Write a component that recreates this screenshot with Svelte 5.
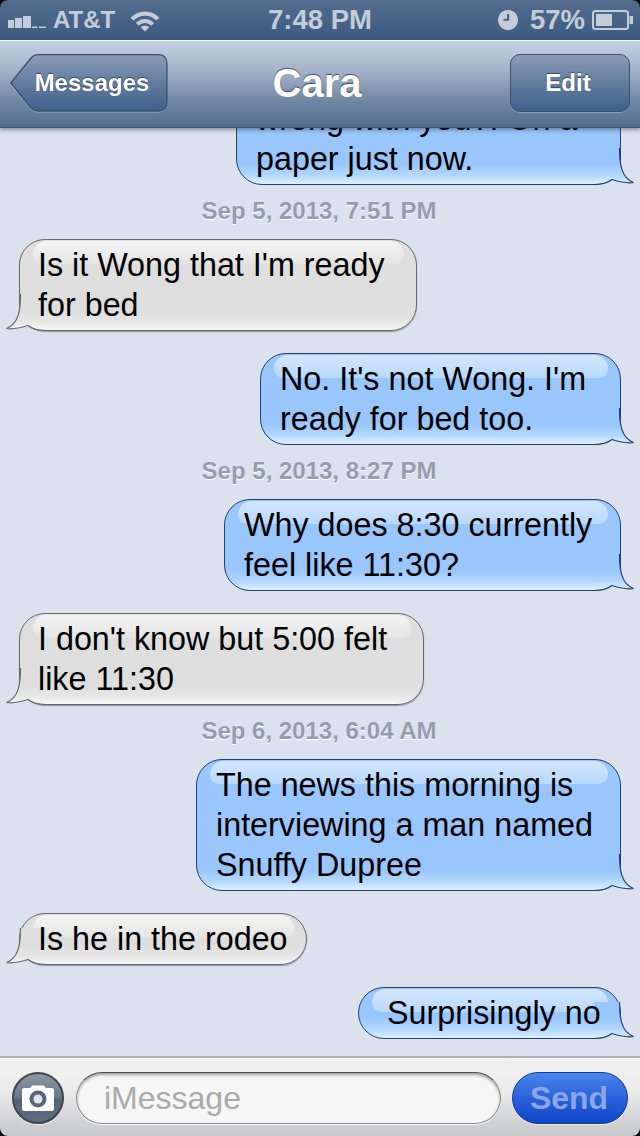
<script>
  const messages = [
    { kind: 'out', width: 385, lines: ['wrong with you?! On a', 'paper just now.'] },
    { date: 'Sep 5, 2013, 7:51 PM' },
    { kind: 'in', width: 398, lines: ["Is it Wong that I'm ready", 'for bed'] },
    { kind: 'out', width: 361, lines: ["No. It's not Wong. I'm", 'ready for bed too.'] },
    { date: 'Sep 5, 2013, 8:27 PM' },
    { kind: 'out', width: 397, lines: ['Why does 8:30 currently', 'feel like 11:30?'] },
    { kind: 'in', width: 405, lines: ["I don't know but 5:00 felt", 'like 11:30'] },
    { date: 'Sep 6, 2013, 6:04 AM' },
    { kind: 'out', width: 425, lines: ['The news this morning is', 'interviewing a man named', 'Snuffy Dupree'] },
    { kind: 'in', width: 288, lines: ['Is he in the rodeo'] },
    { kind: 'out', width: 263, lines: ['Surprisingly no'] }
  ];
</script>

<div class="phone">
  <svg class="defs" width="0" height="0" aria-hidden="true">
    <defs>
      <linearGradient id="tail-out" x1="0" y1="0" x2="0" y2="1">
        <stop offset="0" stop-color="#98c6fd" />
        <stop offset="0.45" stop-color="#98c6fd" />
        <stop offset="0.76" stop-color="#b5d9fd" />
        <stop offset="0.97" stop-color="#dcf2ff" />
      </linearGradient>
      <linearGradient id="tail-in" x1="0" y1="0" x2="0" y2="1">
        <stop offset="0" stop-color="#dedede" />
        <stop offset="0.45" stop-color="#dedede" />
        <stop offset="0.76" stop-color="#e6e6e6" />
        <stop offset="0.97" stop-color="#f6f6f6" />
      </linearGradient>
    </defs>
  </svg>

  <header class="status">
    <div class="carrier">
      <svg class="signal" width="38" height="12" viewBox="0 0 38 12">
        <rect x="0" y="4" width="6" height="8" />
        <rect x="7" y="2" width="7" height="10" />
        <rect x="15" y="0" width="8" height="12" />
        <rect x="24" y="10.500" width="5.500" height="1.500" />
        <rect x="31" y="10.500" width="7" height="1.500" />
      </svg>
      <span>AT&amp;T</span>
      <svg class="wifi" width="32" height="23" viewBox="0 0 32 24">
        <path d="M1 9 C 9 0.5 23 0.5 31 9 L 28 12 C 21.500 5.500 10.500 5.500 4 12 Z" />
        <path d="M6.500 14.500 C 12 9 20 9 25.500 14.500 L 22.500 17.500 C 18.500 13.500 13.500 13.500 9.500 17.500 Z" />
        <path d="M11.500 19 C 14 17 18 17 20.500 19 L 16 23.500 Z" />
      </svg>
    </div>
    <div class="time">7:48 PM</div>
    <div class="power">
      <svg class="clock" width="20" height="20" viewBox="0 0 20 20">
        <path fill-rule="evenodd" d="M10 0 a10 10 0 1 0 0.010 0 Z M9 4 h2.200 v6.800 H5.500 v-2 H9 Z" />
      </svg>
      <span>57%</span>
      <svg class="battery" width="42" height="20" viewBox="0 0 42 20">
        <rect x="1" y="1" width="35" height="18" rx="2.500" fill="none" stroke-width="2" />
        <rect x="4" y="4" width="16" height="12" class="charge" />
        <rect x="37.500" y="6" width="3.500" height="8" class="charge" />
      </svg>
    </div>
  </header>

  <nav class="bar">
    <button class="back">
      <svg width="158" height="58" viewBox="0 0 158 58" aria-hidden="true">
        <defs>
          <linearGradient id="back-fill" x1="0" y1="0" x2="0" y2="1">
            <stop offset="0" stop-color="#8b9cb6" />
            <stop offset="0.5" stop-color="#637d9f" />
            <stop offset="1" stop-color="#3f5f8c" />
          </linearGradient>
        </defs>
        <path d="M0.800 29 L21 4 Q24 0.700 28 0.700 H148 Q157 0.700 157 9.700 V48 Q157 57 148 57 H28 Q24 57 21 54 Z" fill="url(#back-fill)" stroke="#3d4f69" stroke-width="1.300" />
      </svg>
      <span>Messages</span>
    </button>
    <h1>Cara</h1>
    <button class="edit">Edit</button>
  </nav>

  <main class="thread">
    {#each messages as m}
      {#if m.date}
        <div class="date">{m.date}</div>
      {:else}
        <div class="row {m.kind}">
          <div class="bubble {m.kind}" class:single={m.lines.length === 1} style="width: {m.width}px">
            {#each m.lines as line}
              <div class="line">{line}</div>
            {/each}
            <svg class="tail" width="40" height="38" viewBox="0 0 40 38" aria-hidden="true">
              <path d="M0 1 H25.500 C25.500 16 27 31 39.500 35.500 C33 36.500 26 35 18 32.500 C14 35.500 8 37.500 0 37.500 Z" fill="url(#tail-{m.kind})" />
              <path class="tail-edge" d="M25.500 1 C25.500 16 27 31 39.500 35.500 C33 36.500 26 35 18 32.500 C14 35.500 8 37.500 0 37.500" fill="none" />
            </svg>
          </div>
        </div>
      {/if}
    {/each}
  </main>

  <footer class="compose">
    <button class="camera" aria-label="Camera">
      <svg width="32" height="26" viewBox="0 0 32 26">
        <path fill="#fff" d="M2 3 H8 L10 0.500 H22 L24 3 H30 Q32 3 32 5 V24 Q32 26 30 26 H2 Q0 26 0 24 V5 Q0 3 2 3 Z" />
        <circle cx="16" cy="14" r="8.500" fill="#55677c" />
        <circle cx="16" cy="14" r="4.500" fill="#dfe3e8" />
      </svg>
    </button>
    <div class="input">iMessage</div>
    <button class="send">Send</button>
  </footer>
</div>

<style>
  :global(body) {
    margin: 0;
    background: #000;
  }

  .phone {
    width: 640px;
    height: 1136px;
    display: flex;
    flex-direction: column;
    overflow: hidden;
    position: relative;
    font-family: "Liberation Sans", Arial, sans-serif;
    background: #000;
  }

  .defs {
    position: absolute;
  }

  /* status bar */
  .status {
    height: 40px;
    flex: none;
    box-sizing: border-box;
    display: grid;
    grid-template-columns: 1fr auto 1fr;
    align-items: center;
    padding: 0 6px 0 8px;
    color: #c3ccd8;
    font-size: 27.500px;
    font-weight: bold;
    background: linear-gradient(#536d8e, #3c5a80);
    border-radius: 8px 8px 0 0;
  }

  .carrier {
    display: flex;
    align-items: center;
  }

  .carrier span {
    margin-left: 7px;
    font-size: 24px;
  }

  .signal {
    fill: #c3ccd8;
    margin-top: 4px;
  }

  .wifi {
    fill: #c3ccd8;
    margin-left: 14px;
  }

  .time {
    margin-right: 2px;
  }

  .power {
    display: flex;
    align-items: center;
    justify-content: flex-end;
  }

  .power span {
    margin-left: 12px;
  }

  .clock {
    fill: #c3ccd8;
  }

  .battery {
    margin-left: 7px;
    stroke: #c3ccd8;
  }

  .battery .charge {
    fill: #c3ccd8;
    stroke: none;
  }

  /* nav bar */
  .bar {
    height: 88px;
    flex: none;
    box-sizing: border-box;
    display: grid;
    grid-template-columns: 1fr auto 1fr;
    align-items: center;
    padding: 0 10px 2px;
    border-top: 1px solid #f2f5f9;
    border-bottom: 1px solid #3d5371;
    background: linear-gradient(#c3d0e0, #a3b2c8 35%, #7186a3 70%, #516c8f);
    box-shadow: 0 2px 4px rgba(40, 50, 70, 0.45);
    position: relative;
    z-index: 2;
  }

  .bar h1 {
    margin: 0 6px 0 0;
    color: #fff;
    font-size: 40px;
    line-height: 46px;
    font-weight: bold;
    text-shadow: 0 -1px 1px rgba(40, 55, 80, 0.8);
  }

  .bar button {
    height: 58px;
    color: #fff;
    font-family: inherit;
    font-size: 24px;
    font-weight: bold;
    text-shadow: 0 -1px 1px rgba(30, 45, 70, 0.7);
  }

  .back {
    justify-self: start;
    width: 158px;
    padding: 0 0 0 6px;
    border: 0;
    background: none;
    position: relative;
    filter: drop-shadow(0 1px 0 rgba(255, 255, 255, 0.25));
  }

  .back svg {
    position: absolute;
    left: 0;
    top: 0;
  }

  .back span {
    position: relative;
  }

  .edit {
    justify-self: end;
    width: 120px;
    padding: 0 4px 0 0;
    border: 1px solid #3d4f69;
    border-radius: 10px;
    background: linear-gradient(#8b9cb6, #637d9f 50%, #3f5f8c);
    box-shadow: 0 1px 0 rgba(255, 255, 255, 0.25);
  }

  /* messages */
  .thread {
    flex: 1;
    min-height: 0;
    display: flex;
    flex-direction: column;
    justify-content: flex-end;
    padding-bottom: 17px;
    overflow: hidden;
    background: #dbe2ed;
  }

  .date {
    flex: none;
    height: 54px;
    box-sizing: border-box;
    padding: 0 2px 2px 0;
    display: flex;
    align-items: center;
    justify-content: center;
    color: #949dae;
    font-size: 24px;
    font-weight: bold;
    text-shadow: 0 1px 0 #fff;
  }

  .row {
    flex: none;
    display: flex;
  }

  .row + .row {
    margin-top: 22px;
  }

  .row.out {
    justify-content: flex-end;
    padding-right: 19px;
  }

  .row.in {
    padding-left: 19px;
  }

  .bubble {
    position: relative;
    box-sizing: border-box;
    padding: 5px 0 5px 19px;
    border: 1px solid;
    border-radius: 26px;
    color: #000;
    font-size: 32.300px;
    line-height: 40px;
    white-space: nowrap;
  }

  .bubble.out.single {
    padding-left: 28px;
  }

  .bubble.out {
    border-color: #243f78;
    background: linear-gradient(#98c6fd, #98c6fd calc(100% - 20px), #b5d9fd calc(100% - 8px), #dcf2ff);
  }

  .bubble.in {
    padding-left: 18px;
    border-color: #666a70;
    background: linear-gradient(#dedede, #dedede calc(100% - 20px), #e6e6e6 calc(100% - 8px), #f6f6f6);
    box-shadow: 0 1px 1px rgba(90, 95, 105, 0.6);
  }

  /* gloss along the top of each bubble */
  .bubble::before {
    content: "";
    position: absolute;
    top: 1px;
    left: 13px;
    right: 12px;
    height: 23px;
    border-radius: 20px 20px 14px 14px;
  }

  .bubble.out::before {
    background: linear-gradient(#d3e6fd, #b8d8fc);
  }

  .bubble.in::before {
    background: linear-gradient(#f4f4f4, #e4e4e4);
  }

  .line {
    position: relative;
    z-index: 1;
  }

  .tail {
    position: absolute;
    right: -14px;
    bottom: -1px;
  }

  .bubble.in .tail {
    right: auto;
    left: -14px;
    transform: scaleX(-1);
  }

  .bubble.out .tail-edge {
    stroke: #243f78;
    stroke-width: 1.200;
  }

  .bubble.in .tail-edge {
    stroke: #666a70;
    stroke-width: 1.200;
  }

  /* compose bar */
  .compose {
    height: 80px;
    flex: none;
    box-sizing: border-box;
    display: flex;
    align-items: center;
    padding: 14px 12px 12px;
    border-top: 2px solid #aeb0b5;
    border-radius: 0 0 8px 8px;
    background: linear-gradient(#f1f1f1, #ececec 40%, #c6c7ca);
  }

  .camera {
    width: 52px;
    height: 52px;
    flex: none;
    display: flex;
    align-items: center;
    justify-content: center;
    padding: 0;
    border: 2px solid #3c4754;
    border-radius: 50%;
    background: linear-gradient(#8d98a6, #687687 50%, #556476 52%, #5c6b7d);
    box-shadow: 0 1px 0 rgba(255, 255, 255, 0.8);
  }

  .input {
    flex: 1;
    height: 52px;
    box-sizing: border-box;
    margin: 0 11px 0 12px;
    padding-left: 27px;
    border: 1px solid #8a8a8a;
    border-top-color: #4c4c4c;
    border-radius: 26px;
    background: #f6f6f6;
    box-shadow: inset 0 2px 3px rgba(0, 0, 0, 0.35), 0 1px 0 #fff;
    color: #aaa;
    font-size: 32px;
    line-height: 50px;
  }

  .send {
    width: 116px;
    height: 52px;
    flex: none;
    padding: 0 2px 0 0;
    border: 1px solid #123a98;
    border-radius: 26px;
    background: linear-gradient(#4a85ea, #2a62dc 50%, #0f45c8);
    box-shadow: 0 1px 0 rgba(255, 255, 255, 0.7);
    color: #8aa6e9;
    font-family: inherit;
    font-size: 32px;
    font-weight: bold;
  }
</style>
